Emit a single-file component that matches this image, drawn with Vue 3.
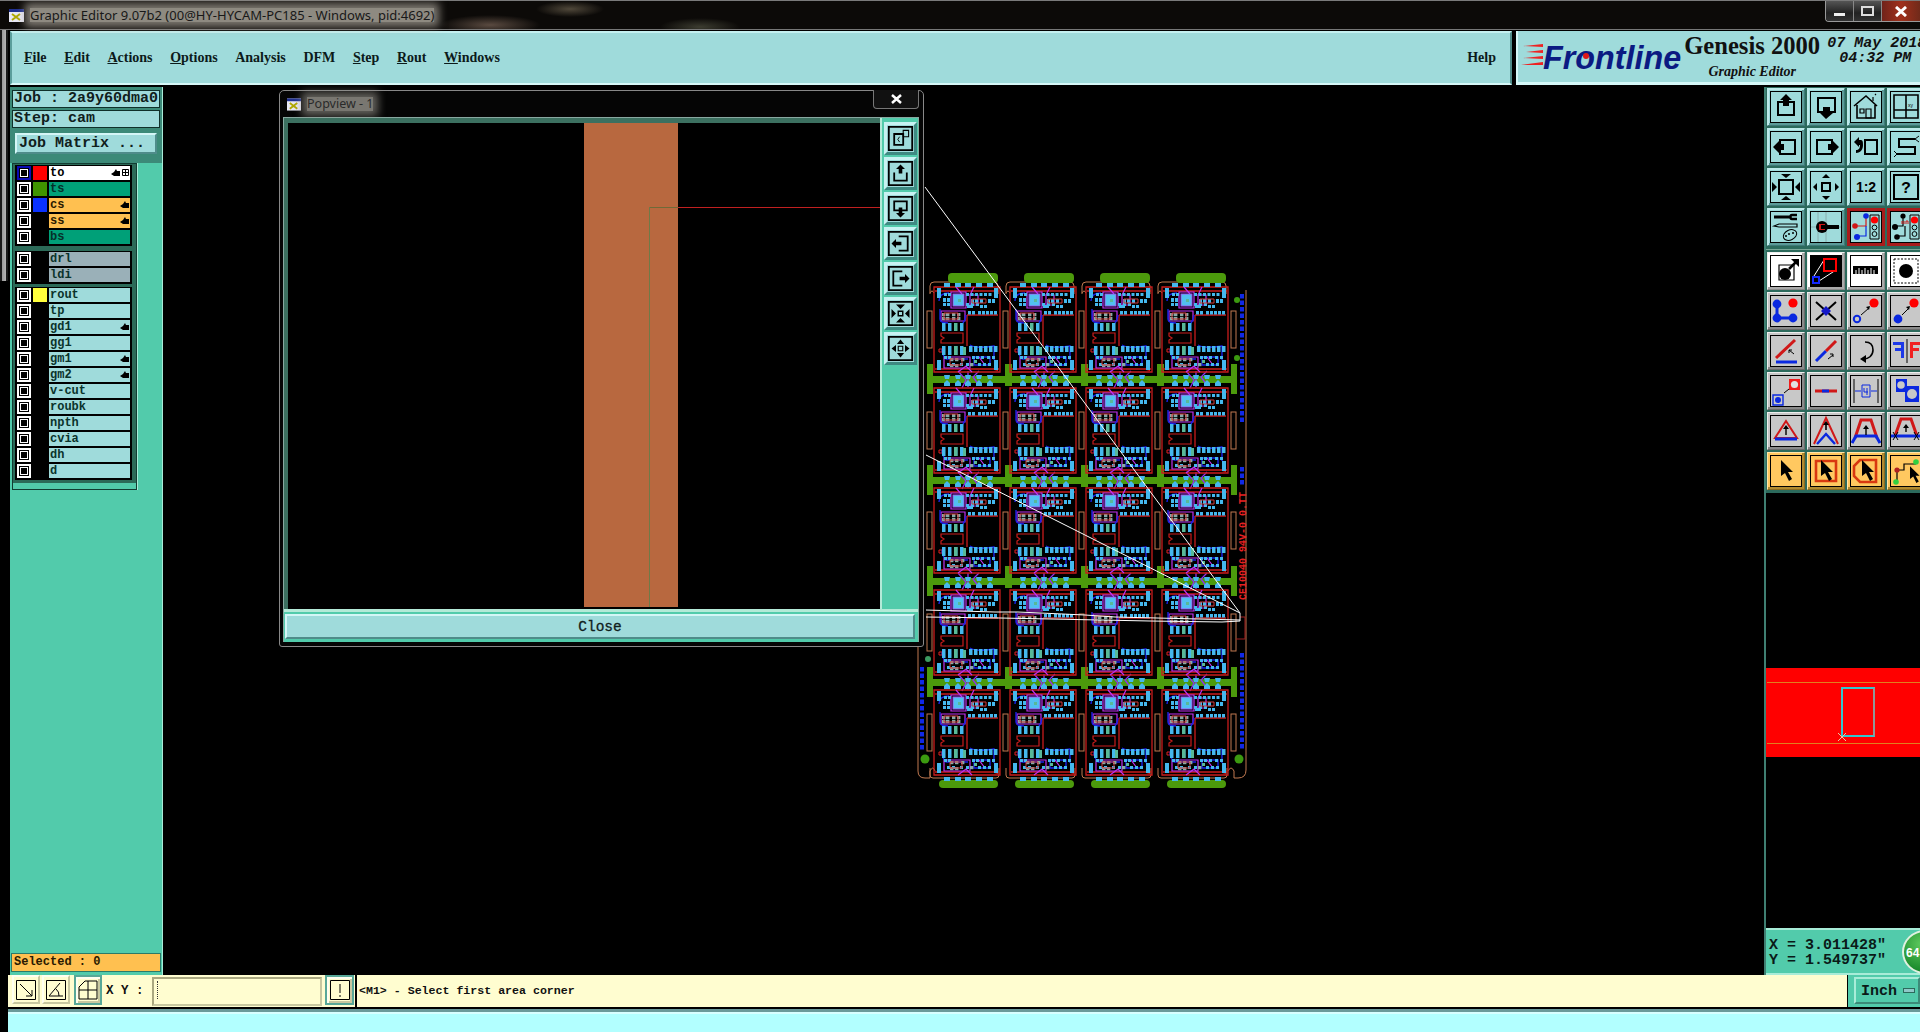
<script setup>
const menus = [
  { u: 'F', t: 'ile' }, { u: 'E', t: 'dit' }, { u: 'A', t: 'ctions' },
  { u: 'O', t: 'ptions' }, { u: '', t: 'Analysis' }, { u: '', t: 'DFM' },
  { u: 'S', t: 'tep' }, { u: 'R', t: 'out' }, { u: 'W', t: 'indows' }
]
const L = (n, kind = 'plain', sw = '', hand = false, extra = {}) => ({ n, kind, sw, hand, ...extra })
const layerGroups = [
  [L('to', 'white', '#ff0000', true, { sel: true, grid: true }), L('ts', 'green', '#3f9400'), L('cs', 'orange', '#0a32ff', true), L('ss', 'orange', '', true), L('bs', 'green')],
  [L('drl', 'gray'), L('ldi', 'gray')],
  [L('rout', 'plain', '#ffff3c'), L('tp'), L('gd1', 'plain', '', true), L('gg1'), L('gm1', 'plain', '', true), L('gm2', 'plain', '', true), L('v-cut'), L('roubk'), L('npth'), L('cvia'), L('dh'), L('d')]
]

const st = (d, w = 2, c = '#000') => `<path d="${d}" fill="none" stroke="${c}" stroke-width="${w}"/>`
const fl = (d, c = '#000') => `<path d="${d}" fill="${c}"/>`
const ci = (x, y, r, c = '#000') => `<circle cx="${x}" cy="${y}" r="${r}" fill="${c}"/>`
const ring = (x, y, r, c = '#000', w = 2) => `<circle cx="${x}" cy="${y}" r="${r}" fill="none" stroke="${c}" stroke-width="${w}"/>`
const cursor = (x = 0, y = 0) => `<path transform="translate(${x} ${y})" d="M10 4v16l4-3 4 8 3-2-4-7h5z" fill="#000"/>`
const RD = '#d01818', BL = '#0a28e0'
const upA = st('M15 19v-6', 1.4) + fl('M15 9l3 4h-6z')

const topIcons = [
  { k: 't', s: st('M7 10h16v13H7z') + fl('M15 2l6 6h-3v6h-6V8H9z') },
  { k: 't', s: st('M7 6h17v14H7z') + fl('M15 27l-6-6h3v-6h7v6h3z') },
  { k: 't', s: st('M3 14 15 4l11 10M6 13v13h18V13', 1.6) + st('M9 17h4v4H9zM15 17h5v9h-5zM22 9V5M24 3l1-1', 1.2) },
  { k: 't', s: st('M3 3h24v23H3zM3 18h24M15 3v23', 1.6) + '<text x="17" y="15" font-size="5" font-family="Liberation Sans">xy</text>' },
  { k: 't', s: st('M9 8h15v14H9z') + fl('M2 15l6-6v3h5v6H8v3z') },
  { k: 't', s: st('M6 8h15v14H6z') + fl('M28 15l-6-6v3h-5v6h5v3z') },
  { k: 't', s: st('M14 8h12v14H14z') + fl('M3 10l5-5v3h2c2 0 2 3 2 5 0 4-2 8-7 8v-3c3 0 4-2 4-5H8v2z') },
  { k: 't', s: st('M24 7H8v8h16v7H6') + st('M24 7l4-3M24 7l4 3M6 22l-3-3M6 22l-3 3', 1) },
  { k: 't', s: st('M8 8h14v14H8z') + fl('M10 2h10l-5 4zM10 28h10l-5-4zM1 10v10l5-5zM29 10v10l-5-5z') },
  { k: 't', s: st('M11 11h8v8h-8z') + fl('M15 2l4 4h-8zM15 28l4-4h-8zM2 15l4-4v8zM28 15l-4-4v8z') },
  { k: 't', s: '<text x="15" y="20" text-anchor="middle" font-size="14" font-weight="700" font-family="Liberation Sans">1:2</text>' },
  { k: 't', s: st('M3 3h24v24H3z') + '<text x="15" y="21" text-anchor="middle" font-size="16" font-weight="700" font-family="Liberation Mono">?</text>' },
  { k: 't', s: st('M3 5h16', 3) + st('M26 3h-5c-2 0-2 4 0 4h5', 2.4) + st('M3 14l5-2h18v3H8z', 1.2) + '<ellipse cx="19" cy="23" rx="7" ry="5" transform="rotate(-25 19 23)" fill="none" stroke="#000"/>' + ci(15, 24, 1) + ci(18, 22, 1) + ci(22, 21, 1) },
  { k: 't', s: st('M15 0v30M0 15h30M7 0v30', 1, '#8ab0b0') + ci(11, 15, 6) + fl('M8 12h6v6H8z', RD) + fl('M10 13h4v4h-4z') + fl('M16 13h12v4H16z') },
  { k: 'r', s: st('M15 4v10h-10', 1.2, RD) + st('M15 14V24H6', 1.2, BL) + ci(15, 4, 2.8, BL) + ci(4, 14, 2.8, RD) + ci(6, 25, 3, BL) + st('M19 3h9v24h-9z', 1) + ci(23.5, 8, 3.6, '#f00') + ring(23.5, 15.5, 2.4, '#000', 1) + ring(23.5, 22, 2.4, '#000', 1) },
  { k: 'r', s: st('M12 4v10H5M14 14v10H6', 1.2) + ci(12, 4, 2.6) + ci(4, 15, 3) + ci(6, 25, 2.8) + st('M11 12v-3m2 3V9m2 3V9h2v3', 1, RD) + st('M19 3h9v24h-9z', 1) + ci(23.5, 8, 3.6, '#f00') + ring(23.5, 15.5, 2.4, '#000', 1) + ring(23.5, 22, 2.4, '#000', 1) }
]
const lowIcons = [
  { k: 'w', s: st('M8 9h15v15H8z', 1.2) + ci(14, 18, 6) + st('M18 13l7-7', 2.5) + fl('M20 3h8v8z') },
  { k: 'w b', s: '<rect width="30" height="30" fill="#000"/>' + st('M3 20 13 4M8 25 25 14', 1, '#fff') + st('M13 3h12v12H13z', 2, '#f00') + st('M2 21h6v6H2z', 2, '#1428ff') },
  { k: 'w', s: fl('M2 10h25v8H2z') + st('M5 14v4M8 12v6M11 14v4M14 12v6M17 14v4M20 12v6M23 14v4', 1, '#fff') },
  { k: 'w', s: '<rect x="3" y="3" width="24" height="24" fill="none" stroke="#000" stroke-dasharray="2 1.5"/>' + ci(15, 15, 7) },
  { k: 'g', s: st('M6 8v14h16', 3, BL) + ci(6, 8, 4.4, BL) + ci(6, 22, 4.4, BL) + ci(22, 22, 4.4, BL) + ci(22, 7, 4.6, '#f00') },
  { k: 'g', s: st('M5 6l20 18M25 6 5 24', 2) + fl('M15 10l5 5-5 5-5-5z', '#1418c8') },
  { k: 'g', s: ring(6, 23, 3.2, BL) + st('M10 19l8-7', 1) + fl('M19 10l-1 4-3-3z') + ci(23, 7, 4.6, '#f00') },
  { k: 'g', s: ci(7, 23, 4.4, BL) + st('M11 19l7-7', 1) + fl('M19 10l-1 4-3-3z') + ci(23, 7, 4.6, '#f00') },
  { k: 'g', s: st('M5 22 24 4', 3, RD) + st('M5 26h21', 3, BL) + st('M23 18l-5-4M18 17v-3h3', 1) },
  { k: 'g', s: st('M5 25 15 15', 3, BL) + st('M15 15 25 5', 3, RD) + st('M17 23l5-4M19 18h3v3', 1) },
  { k: 'g', s: st('M14 6c6 0 8 4 8 8 0 6-5 9-9 9', 1.6) + fl('M9 23l6-4v8z') },
  { k: 'g', s: fl('M2 6h11v3H2zM4 12h9v3H4zM10 6h3v16h-3z', '#1c38e8') + st('M16 3v24', 1) + fl('M19 6h11v3h-8v3h6v3h-6v7h-3z', '#f02020') },
  { k: 'g', s: st('M2 19h10v10H2z', 1.4, BL) + ci(7, 24, 3, BL) + st('M13 17l5-4', 1) + fl('M18 3h11v11H18z', '#f01c1c') + ci(23.5, 8.5, 3.6, '#e0e0e0') },
  { k: 'g', s: st('M4 15h22', 3, RD) + st('M11 15h7', 3, BL) },
  { k: 'g', s: st('M3 3v24M27 3v24', 1) + st('M4 15h6M20 15h6', 1, BL) + st('M11 9h8v12h-8z', 1, BL) + st('M13 12v4h4M16 12v7', 1, BL) },
  { k: 'g', s: fl('M5 3h11v7h12v16H14V16H5z', '#0a28e0') + ci(10, 9, 3.8, '#c8c8c8') + ci(21, 18, 5, '#c8c8c8') },
  { k: 'g', s: st('M15 5 4 22h22z', 2, RD) + st('M4 23h22', 3, BL) + upA },
  { k: 'g', s: st('M3 28 15 2l12 26', 2, RD) + st('M6 28 15 18l9 10', 2.4, BL) + st('M15 14V8', 1.6) + fl('M15 5l3 4h-6z') },
  { k: 'g', s: st('M4 22 10 4h10l6 18', 3, RD) + st('M1 27 5 20h20l4 7', 3, BL) + upA },
  { k: 'g', s: st('M4 20 10 3h10l6 17', 3, RD) + st('M0 20h30', 3, BL) + st('M2 16l5 8M7 16l-5 8M23 16l5 8M28 16l-5 8', 1) + st('M15 16v-5', 1.4) + fl('M15 8l3 4h-6z') },
  { k: 'o', s: cursor() },
  { k: 'o', s: st('M5 5h20v20H5z', 2.6, '#d83810') + cursor() },
  { k: 'o', s: st('M9 4h16v22H9l-6-6V10z', 2.6, '#d83810') + cursor(1, 0) },
  { k: 'o', s: st('M6 14v10M6 14h7V8h12', 1.2) + ci(6, 14, 2.6, '#b02020') + ci(25, 6, 2.8, '#30d040') + ci(5, 26, 2.8, '#30d040') + `<path transform="translate(11 7) scale(.8)" d="M10 4v16l4-3 4 8 3-2-4-7h5z" fill="#000"/>` }
]
const pf = st('M2 2h26v26H2z', 2)
const popIcons = [
  pf + st('M8 10h10v12H8z', 2) + st('M18 6h6v7h-6z', 1.2) + st('M14 13l-2 3 2 3', 1),
  pf + fl('M15 5l5 5h-3v5h-4v-5h-3z') + st('M8 14v9h14v-9', 2),
  pf + st('M8 7h14v10H8z', 2) + fl('M15 25l-5-5h3v-6h4v6h3z'),
  pf + st('M13 7h10v16H13', 2) + fl('M5 15l5-5v3h6v4h-6v3z'),
  pf + st('M17 7H7v16h10', 2) + fl('M25 15l-5-5v3h-6v4h6v3z'),
  pf + st('M12.500 12.500h5v5h-5z', 1.6) + fl('M10 5h10l-5 5zM10 25h10l-5-5zM5 10v10l5-5zM25 10v10l-5-5z'),
  pf + st('M12.500 12.500h5v5h-5z', 1.2) + fl('M15 5l4 5h-8zM15 25l4-5h-8zM5 15l5-4v8zM25 15l-5-4v8z')
]

/* PCB, in page coordinates for the board and local ones for the repeated cell */
const colX = [934, 1010, 1086, 1162]
const rowY = [287, 388, 488, 590, 690]
const cells = []
rowY.forEach(y => colX.forEach(x => cells.push({ x, y })))
const cyanPads = []
const pushRow = (xs, y, w, h) => xs.forEach(x => cyanPads.push({ x, y, w, h }))
pushRow([3, 60], 1, 4, 10); pushRow([3, 60], 73, 4, 10)
pushRow([10, 14, 32, 36.5, 41, 45.5, 50, 54.5], 6, 3, 3)
pushRow([9, 13], 11, 3, 4); pushRow([9, 13, 32, 37, 42], 16, 3, 3)
pushRow([37, 41, 46, 54, 58], 12, 3, 4); pushRow([34, 38, 44, 48, 52, 56, 60], 24, 3, 3.5)
pushRow([33, 36, 46, 50], 18, 3, 3)
pushRow([8, 14, 26], 36, 3.5, 8); pushRow([8, 14, 20, 26], 59, 3.5, 9)
pushRow([35, 40, 45, 50, 55, 60], 59, 3.5, 6)
pushRow([10, 14, 38, 42, 47, 53, 58], 69, 3, 3); pushRow([13, 18, 26, 32, 44, 49, 54], 76, 3, 3)
const grayPads = [[8, 26], [12, 26], [18, 26], [23, 26], [8, 30], [12, 30], [18, 30], [23, 30], [16, 71], [21, 71], [27, 71], [16, 77], [21, 77], [36, 76]]
  .map(([x, y]) => ({ x, y, w: 3.4, h: 3.2 }))
const greenPads = [[20, 36, 3.5, 8], [20, 59, 3.5, 9], [29, 60, 3, 8], [24, 12, 3, 3], [40, 73, 3, 3]]
  .map(([x, y, w, h]) => ({ x, y, w, h }))
const gapYs = [379, 480, 581, 682]
const barX = [1005, 1081, 1157]
const padOffsets = [13, 24, 34, 45, 56]
const gapPads = []
gapYs.forEach(y => colX.forEach(x => padOffsets.forEach(o => {
  gapPads.push({ k: `${x}-${y}-${o}a`, d: `M${x + o - 3} ${y - 4}h6l-1 4h-4z` })
  gapPads.push({ k: `${x}-${y}-${o}b`, d: `M${x + o} ${y + 1}l3 3v3h-6v-3z` })
})))
const traces = []
gapYs.forEach(y => colX.forEach(x => traces.push(`M${x + 24} ${y - 8}l8 9 -4 8M${x + 45} ${y - 8}l-6 6 6 8 M${x + 34} ${y - 8}v16`)))
const capTop = colX.map(x => x + 14)
const capBottom = colX.map(x => x + 5)
const blueSquares = []
for (let y = 667; y < 750; y += 6.5) blueSquares.push({ x: 920, y })
for (let y = 294; y < 422; y += 6.5) blueSquares.push({ x: 1240, y })
for (let y = 467; y < 482; y += 6.5) blueSquares.push({ x: 1240, y })
for (let y = 653; y < 750; y += 6.5) blueSquares.push({ x: 1240, y })
const slots = []
rowY.forEach(y => [...colX, 1238].forEach(x => slots.push({ x: x - 7, y: y + 24 })))
let outline = 'M918 300V771'
colX.forEach(x => { outline += `M${x - 4} 294v-8q0 -4 4 -4h60q4 0 4 4v8` })
colX.forEach(x => { outline += `M${x - 4} 768v7q0 3 3 3h63q3 0 3 -3v-7` })
outline += 'M930 293q2-4 4 0M1006 293q2-4 4 0M1082 293q2-4 4 0M1158 293q2-4 4 0'
outline += 'M1246 290V770q0 8 -8 8h-4v-7q-3 -6 -6 0M918 771q0 7 7 7h5v-7q3 -6 5 0'
</script>

<template>
  <div class="screen">
    <header class="titlebar">
      <svg class="win-icon" viewBox="0 0 15 13"><rect width="15" height="13" fill="#e8e8f4" /><rect width="15" height="3" fill="#203090" /><path d="M3 5l8 6M11 5l-8 6" stroke="#b0a800" stroke-width="2" /></svg>
      <span class="title-text">Graphic Editor 9.07b2 (00@HY-HYCAM-PC185 - Windows, pid:4692)</span>
      <div class="win-ctrls">
        <span class="wc"><i class="wc-min"></i></span>
        <span class="wc"><i class="wc-max"></i></span>
        <span class="wc wc-close"><svg width="12" height="11" viewBox="0 0 12 11"><path d="M1 1l10 9M11 1 1 10" stroke="#fff" stroke-width="3" /></svg></span>
      </div>
    </header>

    <div class="main">
      <div class="menu-row">
        <nav class="menubar">
          <span v-for="m in menus" :key="m.t" class="menu-item"><u>{{ m.u }}</u>{{ m.t }}</span>
          <span class="menu-item help">Help</span>
        </nav>
        <div class="brand">
          <svg class="speed" viewBox="0 0 22 24"><path d="M2 2 22 0v3zM5 8 22 6v3zM2 14 22 12v3zM0 21l22-3v3z" fill="#ee2222" /></svg>
          <span class="frontline">Fr<span class="f-o">o<i></i></span>ntline</span>
          <div class="brand-mid">
            <div class="genesis">Genesis 2000</div>
            <div class="graphic">Graphic Editor</div>
          </div>
          <div class="datebox">
            <div>07 May 2018</div>
            <div class="time">04:32 PM</div>
          </div>
        </div>
      </div>

      <div class="workspace">
        <aside class="left">
          <div class="job">
            <div class="job-field">Job : 2a9y60dma0</div>
            <div class="job-field">Step: cam</div>
            <div class="job-btn-wrap"><div class="job-btn">Job Matrix ...</div></div>
          </div>
          <div class="layers">
            <div v-for="(g, gi) in layerGroups" :key="gi" class="layer-group">
              <div v-for="l in g" :key="l.n" class="layer">
                <span class="chk" :class="{ sel: l.sel }"></span>
                <span class="swatch" :style="{ background: l.sw || '#000' }"></span>
                <span class="lname" :class="'k-' + l.kind">
                  {{ l.n }}
                  <svg v-if="l.hand" class="hand" :class="{ shifted: l.grid }" viewBox="0 0 9 8"><path d="M0 5l3-2 2-3 1 2h3v5H3z" /></svg>
                  <svg v-if="l.grid" class="gridmark" viewBox="0 0 7 7"><path d="M.5.5h6v6h-6zM3.500 .5v6M.5 3.500h6" fill="none" stroke="#000" /></svg>
                </span>
              </div>
            </div>
          </div>
          <div class="left-fill"></div>
          <div class="selected">Selected : 0</div>
        </aside>

        <section class="canvas">
          <svg class="pcb" viewBox="912 268 340 530" width="340" height="530">
            <defs>
              <g id="pcbcell">
                <path d="M0 0h66v85H0zM1 4h64M1 82h64M33 28v31M33 28h31" fill="none" stroke="#c81c1c" stroke-width="1.300" />
                <path d="M7 46h22v10H7v-3l3-2-3-2z" fill="none" stroke="#c81c1c" stroke-width="1.200" />
                <path d="M5 62h3v3H5z" fill="none" stroke="#e02020" />
                <path d="M60 83l4-3v4z" fill="#f01010" />
                <path d="M7 24h24v10H7zM17 5h15v16H17zM36 8h8v10h-8zM10 70h26v11H10z" fill="none" stroke="#c030f0" stroke-width="1.200" />
                <path d="M5 14c0-6 4-8 10-8M6 22v10c0 3 3 4 8 4M29 36c2-3 3-6 3-8M9 60c-2 4 0 9 3 12h22M36 58c6 4 18 2 24 1v14M40 70h16v8H40z" fill="none" stroke="#1a22e8" stroke-width="1.400" />
                <path d="M22 0l6 7M40 0l-4 8M24 85l8-6 6 6M45 70l6 8" fill="none" stroke="#c030f0" stroke-width="1.200" />
                <rect x="19" y="7" width="11" height="12" fill="#52c0f0" stroke="#a050f8" />
                <rect v-for="(p, i) in cyanPads" :key="'c' + i" :x="p.x" :y="p.y" :width="p.w" :height="p.h" fill="#45b8ee" />
                <rect v-for="(p, i) in grayPads" :key="'g' + i" :x="p.x" :y="p.y" :width="p.w" :height="p.h" fill="#88a8a8" />
                <rect v-for="(p, i) in greenPads" :key="'n' + i" :x="p.x" :y="p.y" :width="p.w" :height="p.h" fill="#58b898" />
                <path d="M10 26h14v6H10zM16 72h12v6H16zM38 12h14v4H38z" fill="none" stroke="#d03838" />
              </g>
            </defs>
            <path :d="outline" fill="none" stroke="#c07850" />
            <rect v-for="(s, i) in slots" :key="'s' + i" :x="s.x" :y="s.y" width="5" height="37" fill="none" stroke="#c07850" />
            <rect v-for="y in gapYs" :key="'h' + y" x="927" :y="y - 3" width="310" height="7" fill="#4c9a0c" />
            <g v-for="y in gapYs" :key="'v' + y" fill="#4c9a0c">
              <rect x="927" :y="y - 15" width="6" height="30" />
              <rect x="1231" :y="y - 15" width="6" height="30" />
              <rect v-for="x in barX" :key="x" :x="x" :y="y - 15" width="7" height="22" />
            </g>
            <rect v-for="x in capTop" :key="'t' + x" :x="x" y="273" width="50" height="10" rx="4" fill="#4c9a0c" />
            <rect v-for="x in capBottom" :key="'b' + x" :x="x" y="780" width="59" height="8" rx="4" fill="#4c9a0c" />
            <path v-for="(d, i) in traces" :key="'tr' + i" :d="d" fill="none" stroke="#9030f0" stroke-width="1.300" />
            <path v-for="p in gapPads" :key="p.k" :d="p.d" fill="#45b8ee" />
            <use v-for="c in cells" :key="c.x + '-' + c.y" href="#pcbcell" :x="c.x" :y="c.y" />
            <g fill="#45b8ee">
              <template v-for="x in colX" :key="'p' + x">
                <rect v-for="o in padOffsets" :key="o" :x="x + o - 3" y="283" width="6" height="4" />
                <rect v-for="o in padOffsets" :key="'l' + o" :x="x + o - 3" y="777" width="6" height="4" />
              </template>
            </g>
            <rect v-for="(b, i) in blueSquares" :key="'q' + i" :x="b.x" :y="b.y" width="4" height="4.500" fill="#1028e8" />
            <circle cx="925" cy="759" r="4.500" fill="#3c9a10" />
            <circle cx="1239" cy="759" r="4.500" fill="#3c9a10" />
            <circle cx="928" cy="659" r="3" fill="#3c9a60" />
            <circle cx="1237" cy="300" r="3" fill="#3c9a10" />
            <circle cx="1237" cy="358" r="3" fill="#3c9a10" />
            <text class="pcb-text" transform="translate(1246 600) rotate(-90)">CE10040 94V-0 0.TT</text>
            <path d="M1240 617h5v22h-9" fill="none" stroke="#a02020" />
            <path d="M926 455 1240 613 925 187M926 610l69 2h23l67 3 30 2 125 3M926 617l74 1 150 3 72 1 18-1v-8" fill="none" stroke="#fff" />
          </svg>

          <div class="popup">
            <div class="pop-title">
              <svg class="win-icon small" viewBox="0 0 15 13"><rect width="15" height="13" fill="#e8e8f4" /><rect width="15" height="3" fill="#203090" /><path d="M3 5l8 6M11 5l-8 6" stroke="#b0a800" stroke-width="2" /></svg>
              <span class="pop-name">Popview - 1</span>
              <span class="pop-x"><svg width="11" height="10" viewBox="0 0 11 10"><path d="M1 1l9 8M10 1 1 9" stroke="#fff" stroke-width="2.500" /></svg></span>
            </div>
            <div class="pop-body">
              <div class="pop-top">
                <div class="pop-view">
                  <div class="copper"></div>
                  <div class="net-h"></div>
                  <div class="net-v"></div>
                  <div class="net-r"></div>
                </div>
                <div class="pop-tools">
                  <div v-for="(s, i) in popIcons" :key="i" class="pop-btn">
                    <svg viewBox="0 0 30 30" v-html="s"></svg>
                  </div>
                </div>
              </div>
              <div class="close-btn">Close</div>
            </div>
          </div>
        </section>

        <aside class="right">
          <div class="icon-grid">
            <div v-for="(ic, i) in topIcons" :key="i" class="ibtn" :class="'i-' + ic.k">
              <svg viewBox="0 0 30 30" v-html="ic.s"></svg>
            </div>
          </div>
          <div class="icon-grid low">
            <div v-for="(ic, i) in lowIcons" :key="i" class="ibtn" :class="'i-' + ic.k">
              <svg viewBox="0 0 30 30" v-html="ic.s"></svg>
            </div>
          </div>
          <div class="blk one"></div>
          <div class="overview">
            <div class="ov-band"></div>
            <div class="ov-rect"></div>
            <svg class="ov-mark" viewBox="0 0 8 8"><path d="M0 0l8 8M8 0 0 8" stroke="#e8c8a0" fill="none" /></svg>
          </div>
          <div class="blk two"></div>
          <div class="coords">
            <div>X = 3.011428"</div>
            <div>Y = 1.549737"</div>
            <span class="badge">64</span>
          </div>
        </aside>
      </div>

      <footer class="statusbar">
        <div class="sbtn plain"><svg viewBox="0 0 20 20"><path d="M.5.5h19v19H.5zM4 4l12 12M16 10v6h-6" fill="none" stroke="#000" /></svg></div>
        <div class="sbtn plain"><svg viewBox="0 0 20 20"><path d="M.5.5h19v19H.5zM3 16h14M3 16 14 3M10 9a8 8 0 0 1 3 7" fill="none" stroke="#000" /></svg></div>
        <div class="sbtn teal"><svg viewBox="0 0 20 20"><path d="M1 19V7l6-6h12v18zM1 10h18M10 1v18" fill="none" stroke="#000" /></svg></div>
        <span class="xy">X Y :</span>
        <div class="xy-input"><i></i></div>
        <div class="sbtn teal bang"><svg viewBox="0 0 20 20"><path d="M.5.5h19v19H.5zM10 4v9M10 15v2" fill="none" stroke="#000" /></svg></div>
        <div class="message">&lt;M1&gt; - Select first area corner</div>
        <div class="units"><div class="unit-btn">Inch<i></i></div></div>
      </footer>
      <div class="strip"></div>
    </div>
  </div>
</template>

<style>
html, body { margin: 0; background: #000; overflow: hidden; }
</style>

<style scoped>
.screen { width: 1920px; height: 1032px; background: #000; display: flex; flex-direction: column; overflow: hidden; font-family: "Liberation Mono", monospace; }

.titlebar { height: 30px; box-sizing: border-box; display: flex; align-items: center; padding-left: 9px; gap: 6px; border-top: 1px solid #7a7a7a; border-bottom: 1px solid #777;
  background: radial-gradient(ellipse 50px 10px at 490px 24px, #5a4a40, transparent), radial-gradient(ellipse 34px 8px at 570px 8px, #50483a, transparent), radial-gradient(ellipse 40px 9px at 700px 26px, #3c3c30, transparent), #0c0a08; position: relative; }
.win-icon { width: 15px; height: 13px; flex: none; }
.title-text { font: 13px "Noto Sans", sans-serif; color: #181818; background: rgba(175,170,160,.8); box-shadow: 0 0 9px 5px rgba(175,170,160,.7); line-height: 14px; white-space: nowrap; }
.win-ctrls { margin-left: auto; display: flex; align-self: flex-start; height: 20px; border: 1px solid #999; border-top: 0; border-right: 0; border-radius: 0 0 0 4px; overflow: hidden; }
.wc { width: 27px; display: flex; align-items: center; justify-content: center; background: linear-gradient(#555, #222 60%, #333); border-right: 1px solid #888; }
.wc-min { width: 11px; height: 3px; background: #eee; margin-top: 6px; }
.wc-max { width: 9px; height: 6px; border: 2px solid #ddd; }
.wc-close { width: 38px; border-right: 0; background: linear-gradient(to right, #70231a, #a0301c 50%, #702a1a); }

.main { flex: 1; min-height: 0; display: flex; flex-direction: column; padding-left: 10px; background: linear-gradient(to right, #1a1a1a 2px, #9a9a9a 2px, #b4b4b4 6px, #1a1a1a 6px) no-repeat 0 0 / 8px 251px, #000; }

.menu-row { height: 57px; display: flex; padding: 1px 0 2px; box-sizing: border-box; background: #000; gap: 4px; }
.menubar { width: 1502px; flex: none; box-sizing: border-box; display: flex; align-items: center; gap: 17.600px; padding: 0 14px 0 12px; background: #9fdbdb; border: 2px solid; border-color: #c4f0f0 #4f8c8a #d6f8f8 #5b9e9c; font: 700 14px "Liberation Serif", serif; color: #0c1a1a; }
.menu-item { white-space: nowrap; }
.help { margin-left: auto; }
.brand { flex: 1; min-width: 0; box-sizing: border-box; display: flex; background: #9fdbdb; border-bottom: 3px solid #d6f8f8; border-left: 2px solid #d6f8f8; position: relative; overflow: hidden; padding-left: 3px; }
.speed { width: 22px; height: 24px; margin-top: 13px; flex: none; }
.frontline { font: italic 700 32.300px "Liberation Sans", sans-serif; color: #0b1a82; line-height: 53px; white-space: nowrap; margin-top: 1px; flex: none; }
.f-o { position: relative; }
.f-o i { position: absolute; left: 7.500px; top: 13px; width: 6px; height: 6px; background: #e01818; border-radius: 50%; }
.brand-mid { margin-left: 3px; width: 142px; flex: none; text-align: center; color: #111; }
.genesis { font: 700 24.600px/28px "Liberation Serif", serif; margin-top: 1px; white-space: nowrap; text-align: left; }
.graphic { font: italic 700 14px/16px "Liberation Serif", serif; margin-top: 4px; padding-right: 6px; }
.datebox { font: italic 700 15px/15px "Liberation Mono", monospace; color: #111; white-space: pre; margin: 5px 0 0 1px; flex: none; }
.time { padding-left: 12px; }

.workspace { height: 888px; display: flex; }
.left { width: 153px; flex: none; display: flex; flex-direction: column; background: #52cbab; border-right: 1px solid #a8ecd8; box-sizing: border-box; }
.job { background: #3c8a78; padding: 3px 2px 0; height: 76px; box-sizing: border-box; display: flex; flex-direction: column; gap: 2px; font-size: 15px; font-weight: 700; color: #10201c; }
.job-field { height: 18px; box-sizing: border-box; background: #9fdbdb; border: 1px solid #10302a; line-height: 16px; padding-left: 1px; white-space: pre; overflow: hidden; }
.job-btn-wrap { height: 27px; box-sizing: border-box; padding: 3px 3px 2px; background: #3c8a78; }
.job-btn { height: 21px; box-sizing: border-box; background: #9fdbdb; border: 2px solid; border-color: #d4f6f6 #4f8c8a #4f8c8a #d4f6f6; line-height: 17px; padding-left: 2px; font-weight: 700; white-space: pre; }

.layers { width: 125px; height: 327px; box-sizing: border-box; margin-left: 2px; border: 1px solid #123c32; box-shadow: 1px 0 0 #a8ecd8; padding: 1px; background: #2c6a58; display: flex; flex-direction: column; gap: 3px; }
.layer-group { background: #000; padding: 1px 2px 2px; display: flex; flex-direction: column; gap: 2px; border: 0; width: 117px; margin-left: 1px; box-sizing: border-box; }
.layer-group:nth-child(2) { margin-top: 2px; }
.layers::after { content: ""; flex: 1; background: #52cbab; margin: 0 -1px -1px; }
.layer { display: flex; gap: 2px; height: 14px; }
.chk { width: 14px; height: 14px; flex: none; background: #000; box-shadow: inset 0 0 0 2px #fff, inset 0 0 0 3px #000, inset 0 0 0 4px #fff; }
.chk.sel { box-shadow: inset 0 0 0 2px #0a0ab4, inset 0 0 0 3px #000, inset 0 0 0 4px #fff; }
.swatch { width: 14px; height: 14px; flex: none; }
.lname { flex: 1; min-width: 0; position: relative; font: 700 12px/14px "Liberation Mono", monospace; color: #0a332b; padding-left: 1px; }
.k-plain { background: #9fdbdb; }
.k-white { background: #fff; color: #000; }
.k-green { background: #00a078; color: #06302a; }
.k-orange { background: #ffc050; color: #2a1a00; }
.k-gray { background: #9ab0b8; }
.hand { position: absolute; right: 1px; top: 3px; width: 9px; height: 8px; fill: #000; }
.hand.shifted { right: 10px; }
.gridmark { position: absolute; right: 1px; top: 3px; width: 7px; height: 7px; }
.left-fill { flex: 1; }
.selected { height: 19px; margin: 0 1px 3px; box-sizing: border-box; background: #ffc050; border: 1px solid #2c7a68; font: 700 12px/17px "Liberation Mono", monospace; color: #2a1a00; padding-left: 2px; }

.canvas { flex: 1; min-width: 0; position: relative; background: #000; }
.pcb { position: absolute; left: 749px; top: 181px; overflow: visible; }
.pcb-text { font: 700 10px "Liberation Mono", monospace; fill: #e82020; }

.popup { position: absolute; left: 116px; top: 3px; width: 645px; height: 557px; box-sizing: border-box; border: 1px solid #888; border-radius: 5px 5px 3px 3px; background: #050505; padding: 0 4px 4px 3px; display: flex; flex-direction: column; z-index: 2; }
.pop-title { height: 26px; display: flex; align-items: center; gap: 6px; padding-left: 4px; flex: none; position: relative; }
.win-icon.small { width: 14px; height: 13px; }
.pop-name { font: 12.500px "Noto Sans", sans-serif; color: #2a2a2a; background: rgba(150,148,140,.8); box-shadow: 0 0 8px 5px rgba(150,148,140,.65); line-height: 14px; }
.pop-x { position: absolute; right: 0; top: -1px; width: 46px; height: 19px; border: 1px solid #777; border-top: 0; border-radius: 0 0 4px 4px; display: flex; align-items: center; justify-content: center; background: #111; box-sizing: border-box; }
.pop-body { flex: 1; min-height: 0; display: flex; flex-direction: column; background: #52cbab; border: 1px solid #88a8a0; border-bottom: 0; }
.pop-top { height: 494px; display: flex; background: #b4ead8; padding-bottom: 3px; box-sizing: border-box; }
.pop-view { width: 596px; box-sizing: border-box; border: solid #3c7060; border-width: 5px 0 0 4px; background: #000; position: relative; }
.copper { position: absolute; left: 296px; top: 0; width: 94px; height: 484px; background: #b8683f; }
.net-h { position: absolute; left: 362px; top: 84px; width: 28px; height: 1px; background: #6f6a38; }
.net-v { position: absolute; left: 361px; top: 84px; width: 1px; height: 400px; background: #6f7a48; }
.net-r { position: absolute; left: 390px; top: 84px; width: 202px; height: 1px; background: #c02020; }
.pop-tools { flex: 1; background: #52cbab; border-left: 2px solid #b4ead8; display: flex; flex-direction: column; gap: 2px; padding: 4px 0 0 2px; box-sizing: border-box; }
.pop-btn { width: 33px; height: 33px; box-sizing: border-box; background: #9fdbdb; border: 3px solid; border-color: #c8f2f2 #3e8a82 #3e8a82 #c8f2f2; }
.pop-btn svg { display: block; width: 27px; height: 27px; }
.close-btn { flex: 1; margin: 2px 3px 3px 1px; background: #9fdbdb; border: 2px solid; border-color: #d4f6f6 #4f8c8a #4f8c8a #d4f6f6; display: flex; align-items: center; justify-content: center; font: 14.500px "Liberation Mono", monospace; color: #10201c; -webkit-text-stroke: .3px #10201c; }

.right { width: 156px; flex: none; box-sizing: border-box; display: flex; flex-direction: column; background: #2c6a5c; border-left: 2px solid #3f7f72; overflow: hidden; }
.icon-grid { display: grid; grid-template-columns: repeat(4, 38px); gap: 2px; padding: 1px 0 0 1px; width: 200px; flex: none; }
.icon-grid.low { margin-top: 3px; padding-top: 2px; border-top: 1px solid #7aa898; }
.ibtn { width: 38px; height: 38px; box-sizing: border-box; padding: 3px; border: 1px solid; display: block; }
.ibtn svg { display: block; width: 30px; height: 30px; box-sizing: border-box; outline: 1px solid #000; }
.i-t { background: #9fdbdb; border-color: #bdeaea #3f7a78 #3f7a78 #bdeaea; box-shadow: inset 1px 1px 0 #bdeaea, inset -2px -2px 0 #5b9a98; }
.i-r { background: #9fdbdb; border: 4px solid #a81c1c; padding: 0; }
.i-r svg { width: 30px; height: 30px; }
.i-w { background: #fff; border-color: #eee #8a8a8a #8a8a8a #eee; box-shadow: inset -2px -2px 0 #aaa; }
.i-g { background: #c8c8c8; border-color: #eee #6a6a6a #6a6a6a #eee; box-shadow: inset -2px -2px 0 #8a8a8a; }
.i-o { background: #ffc860; border-color: #ffe4a8 #8a6a20 #8a6a20 #ffe4a8; box-shadow: inset -2px -2px 0 #b08a30; }
.blk { background: #000; flex: none; }
.blk.one { height: 175px; margin-top: 3px; }
.blk.two { flex: 1; }
.overview { height: 89px; flex: none; background: #f00; position: relative; }
.ov-band { position: absolute; left: 1px; right: 0; top: 14px; height: 60px; border: solid #e08020; border-width: 1px 0; }
.ov-rect { position: absolute; left: 75px; top: 19px; width: 34px; height: 50px; box-sizing: border-box; border: 2px solid #30c8d0; border-right-color: #909898; }
.ov-mark { position: absolute; left: 72px; top: 65px; width: 8px; height: 8px; }
.coords { height: 47px; flex: none; box-sizing: border-box; background: #52cbab; border-top: 2px solid #a8ecd8; border-bottom: 2px solid #a8ecd8; padding: 8px 0 0 3px; font: 700 15px/15px "Liberation Mono", monospace; color: #0a1a18; position: relative; white-space: pre; }
.badge { position: absolute; left: 136px; top: 0; width: 46px; height: 44px; border-radius: 50%; background: radial-gradient(circle at 40% 30%, #5cc85c, #1a8a2c 70%); border: 2px solid #e0f0e0; box-sizing: border-box; font: 700 12px/42px "Liberation Sans", sans-serif; color: #fff; padding-left: 2px; }

.statusbar { height: 32px; flex: none; display: flex; align-items: stretch; background: #fffdd0; margin-left: -2px; padding-left: 4px; }
.sbtn { flex: none; box-sizing: border-box; display: flex; align-items: center; justify-content: center; }
.sbtn svg { width: 20px; height: 20px; }
.sbtn.plain { width: 28px; margin-right: 2px; height: 29px; border: 2px solid; border-color: #fffff0 #c8c8a0 #c8c8a0 #fffff0; }
.sbtn.teal { width: 28px; height: 30px; margin-left: 2px; background: #fffdd0; border: 2px solid #58a898; box-shadow: inset 2px 2px 0 #fffff0, inset -2px -2px 0 #c8c8a0; }
.xy { font: 700 12.500px/32px "Liberation Mono", monospace; color: #111; margin-left: 4px; width: 46px; white-space: pre; }
.xy-input { width: 170px; height: 29px; margin-top: 2px; box-sizing: border-box; border: 2px solid; border-color: #aaa880 #c8c8a0 #c8c8a0 #aaa880; padding: 2px 3px; }
.xy-input i { display: block; width: 1px; height: 18px; border-left: 1px dotted #333; }
.sbtn.teal.bang { margin-left: 3px; width: 29px; }
.message { flex: 1; border-left: 2px solid #000; margin-left: 1px; font: 700 11.600px/32px "Liberation Mono", monospace; color: #111; padding-left: 2px; white-space: pre; }
.units { width: 73px; flex: none; box-sizing: border-box; background: #52cbab; border-left: 1px solid #000; padding: 2px 0 2px 6px; }
.unit-btn { height: 27px; box-sizing: border-box; background: #52cbab; border: 2px solid; border-color: #a8ecd8 #3c8a78 #3c8a78 #a8ecd8; font: 700 15px/25px "Liberation Mono", monospace; color: #0a1a18; padding-left: 5px; position: relative; white-space: nowrap; }
.unit-btn i { position: absolute; left: 47px; top: 9px; width: 12px; height: 5px; background: #8fc8c8; border: 1px solid #2c6a5c; box-sizing: border-box; }
.strip { flex: 1; margin-left: -2px; background: #b2ffff; border-top: 2px solid #000; box-shadow: inset 0 3px 0 #6a9a9a, inset 0 5px 0 #d8ffff; }
</style>
